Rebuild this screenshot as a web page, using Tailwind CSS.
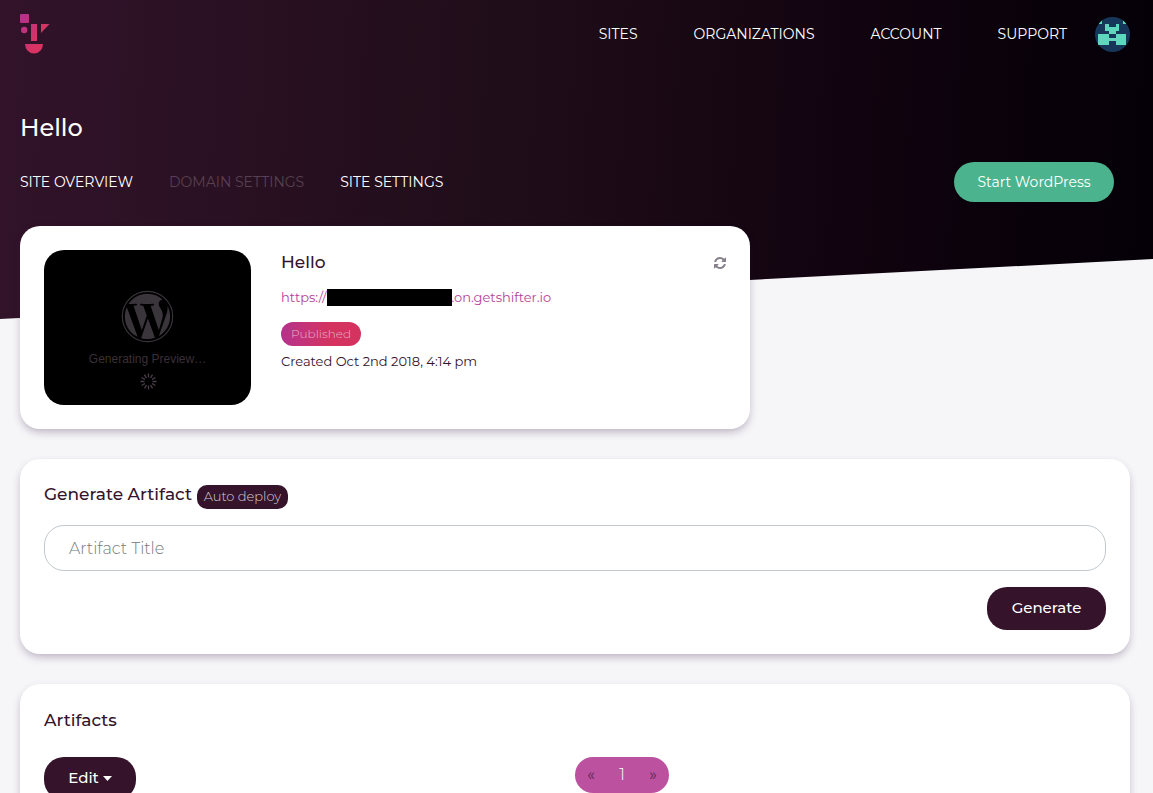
<!DOCTYPE html>
<html lang="en">
<head>
    <meta charset="UTF-8">
    <meta name="viewport" content="width=device-width, initial-scale=1.0">
    <title>Hello - Site Overview</title>
    <script src="https://cdn.jsdelivr.net/npm/@tailwindcss/browser@4"></script>
</head>
<body class="relative min-h-screen overflow-x-hidden bg-[#f6f6f9] font-['Montserrat','Inter',sans-serif] text-[#34132b]">
    <!-- Slanted backdrop -->
    <div class="absolute inset-x-0 top-0 h-[319px] bg-linear-93 from-[#32132a] via-[#1d0c17] to-[#050007] [clip-path:polygon(0_0,100%_0,100%_calc(100%-60px),0_100%)]"></div>

    <div class="relative pl-5 pr-[23px]">
        <!-- Header -->
        <header class="flex h-[68px] items-center justify-between">
            <a href="#" aria-label="Shifter">
                <svg class="h-10 w-[30px]" viewBox="0 0 30 40">
                    <defs>
                        <linearGradient id="brand" gradientUnits="userSpaceOnUse" x1="4" y1="0" x2="24" y2="10">
                            <stop offset="0" stop-color="#b5318c"/>
                            <stop offset="1" stop-color="#d93364"/>
                        </linearGradient>
                    </defs>
                    <g fill="url(#brand)">
                        <rect x="0" y="0" width="9" height="9" rx="1"/>
                        <circle cx="4.200" cy="16" r="3.200"/>
                        <rect x="11" y="10" width="6" height="17"/>
                        <path d="M21 10h8.500L21 19z"/>
                        <path d="M5 30h18a9 9.500 0 0 1-18 0z"/>
                    </g>
                </svg>
            </a>
            <div class="flex items-center gap-7">
                <nav class="flex gap-14 text-sm text-white">
                    <a href="#">SITES</a>
                    <a href="#">ORGANIZATIONS</a>
                    <a href="#">ACCOUNT</a>
                    <a href="#">SUPPORT</a>
                </nav>
                <svg class="size-[35px] rounded-full bg-[#17375a]" viewBox="0 0 35 35" fill="#5fd7bd" shape-rendering="crispEdges">
                    <path d="M3 3h4v4H3zM28 3h4v4h-4zM10 7h4v3h7V7h3v7h-3v3h-7v-3h-4zM3 17h11v4h7v-4h10v11H21v-4h-7v4H3z"/>
                </svg>
            </div>
        </header>

        <!-- Page heading -->
        <h1 class="mt-11 text-2xl leading-8 font-medium text-white">Hello</h1>
        <div class="mt-[18px] flex items-center justify-between pr-4">
            <nav class="flex gap-9 text-sm text-white">
                <a href="#">SITE OVERVIEW</a>
                <a href="#" class="text-[#57404f]" aria-disabled="true">DOMAIN SETTINGS</a>
                <a href="#">SITE SETTINGS</a>
            </nav>
            <button type="button" class="h-10 w-40 rounded-full bg-[#4bb38d] text-sm text-white">Start WordPress</button>
        </div>

        <main class="mt-6 space-y-[30px]">
            <!-- Site card -->
            <section class="flex w-[730px] max-w-full gap-[30px] rounded-[20px] bg-white p-6 shadow-[0_4px_9px_-1px_rgba(52,19,60,0.3)]">
                <div class="flex h-[155px] w-[207px] shrink-0 flex-col items-center rounded-[20px] bg-black pt-10 text-[#3a2f38]">
                    <svg class="size-[53px]" viewBox="0 0 24 24" fill="#3a353a">
                        <circle cx="12" cy="12" r="11.400" fill="none" stroke="#3a353a" stroke-width=".5"/>
                        <path transform="translate(.6 .6) scale(.95)" d="M21.469 6.825c.84 1.537 1.318 3.3 1.318 5.175 0 3.979-2.156 7.456-5.363 9.325l3.295-9.527c.615-1.540.82-2.771.82-3.864 0-.405-.026-.78-.07-1.110m-7.981.105c.647-.03 1.232-.105 1.232-.105.582-.075.514-.93-.067-.899 0 0-1.755.135-2.880.135-1.064 0-2.850-.15-2.850-.15-.585-.03-.661.855-.075.885 0 0 .54.061 1.125.09l1.680 4.605-2.370 7.080L5.354 6.900c.649-.03 1.234-.1 1.234-.1.585-.075.516-.93-.065-.896 0 0-1.746.138-2.874.138-.2 0-.438-.008-.69-.015C4.911 3.150 8.235 1.215 12 1.215c2.809 0 5.365 1.072 7.286 2.833-.046-.003-.091-.009-.141-.009-1.060 0-1.812.923-1.812 1.914 0 .89.513 1.643 1.060 2.531.411.72.89 1.643.89 2.977 0 .915-.354 1.994-.821 3.479l-1.075 3.585-3.900-11.610zM12 22.784c-1.059 0-2.081-.153-3.048-.437l3.237-9.406 3.315 9.087c.024.053.05.101.078.149-1.120.393-2.325.609-3.582.609M1.211 12c0-1.564.336-3.050.935-4.390L7.290 21.709C3.694 19.960 1.212 16.271 1.211 12"/>
                    </svg>
                    <p class="mt-1.5 font-['Liberation_Sans',sans-serif] text-xs leading-5">Generating Preview…</p>
                    <svg class="mt-1 ml-0.5 size-[17px]" viewBox="-8.5 -8.5 17 17" stroke="#4a3f48" stroke-width="1.300">
                        <path d="M0-8v4M0 4v4M-8 0h4M4 0h4"/>
                        <path transform="rotate(30)" d="M0-8v4M0 4v4M-8 0h4M4 0h4"/>
                        <path transform="rotate(60)" d="M0-8v4M0 4v4M-8 0h4M4 0h4"/>
                    </svg>
                </div>
                <div class="min-w-0 grow">
                    <div class="flex h-[26px] items-center justify-between">
                        <h2 class="text-[17px] font-medium">Hello</h2>
                        <button type="button" aria-label="Refresh">
                            <svg class="size-3" viewBox="0 0 1536 1536" fill="#85808a">
                                <path d="M1511 928q0 5-1 7-64 268-268 434.500T764 1536q-146 0-282.500-55T238 1324l-129 129q-19 19-45 19t-45-19-19-45V960q0-26 19-45t45-19h448q26 0 45 19t19 45-19 45l-137 137q71 66 161 102t187 36q134 0 250-65t186-179q11-17 53-117 8-23 30-23h192q13 0 22.500 9.500t9.500 22.500zm25-800v448q0 26-19 45t-45 19h-448q-26 0-45-19t-19-45 19-45l138-138Q969 256 768 256q-134 0-250 65T332 500q-11 17-53 117-8 23-30 23H50q-13 0-22.500-9.500T18 608v-7q65-268 270-434.500T768 0q146 0 284 55.500T1297 212l130-129q19-19 45-19t45 19 19 45z"/>
                            </svg>
                        </button>
                    </div>
                    <a href="#" class="mt-3 flex h-5 items-center text-[13px] text-[#b5429a]">https://<span class="mb-0.5 h-[17px] w-[125px] bg-black"></span>.on.getshifter.io</a>
                    <span class="mt-3.5 flex h-6 w-20 items-center justify-center rounded-full bg-linear-to-r from-[#b5318c] to-[#d4325f] to-60% text-xs font-light text-[#eab0d0]">Published</span>
                    <p class="mt-[5px] text-[13px] leading-5">Created Oct 2nd 2018, 4:14 pm</p>
                </div>
            </section>

            <!-- Generate artifact -->
            <section class="rounded-[20px] bg-white p-6 shadow-[0_4px_9px_-1px_rgba(52,19,60,0.3)]">
                <form>
                    <div class="flex h-[26px] items-end gap-[5px]">
                        <h2 class="self-start text-[17px] font-medium leading-[22px]"><label for="artifactTitle">Generate Artifact</label></h2>
                        <span class="flex h-6 w-[91px] items-center justify-center rounded-[10px] bg-[#34132b] text-[13px] font-light text-[#d6cbd3]">Auto deploy</span>
                    </div>
                    <input type="text" id="artifactTitle" placeholder="Artifact Title" class="mt-4 block h-[46px] w-full rounded-[20px] border border-[#c3c8cc] px-6 text-base font-light placeholder:text-[#757a7d]">
                    <div class="mt-4 flex justify-end">
                        <button type="submit" class="h-[43px] w-[119px] rounded-[20px] bg-[#34132b] text-[15px] font-medium text-white">Generate</button>
                    </div>
                </form>
            </section>

            <!-- Artifacts -->
            <section class="rounded-[20px] bg-white p-6 shadow-[0_4px_9px_-1px_rgba(52,19,60,0.3)]">
                <h2 class="text-[17px] font-medium leading-6">Artifacts</h2>
                <div class="mt-[25px] grid grid-cols-2 items-start">
                    <button type="button" class="flex h-[43px] w-[92px] items-center justify-center gap-1 rounded-[20px] bg-[#34132b] text-[15px] font-medium text-white">
                        Edit
                        <svg class="h-[5px] w-[9px]" viewBox="0 0 9 5" fill="currentColor"><path d="M0 0h9L4.500 5z"/></svg>
                    </button>
                    <nav aria-label="Pages" class="flex h-9 w-[94px] items-center justify-around rounded-full bg-[#bb519f] text-[#5a2a50]">
                        <a href="#">«</a>
                        <a href="#" class="font-light text-white">1</a>
                        <a href="#">»</a>
                    </nav>
                </div>
            </section>
        </main>
    </div>
</body>
</html>
